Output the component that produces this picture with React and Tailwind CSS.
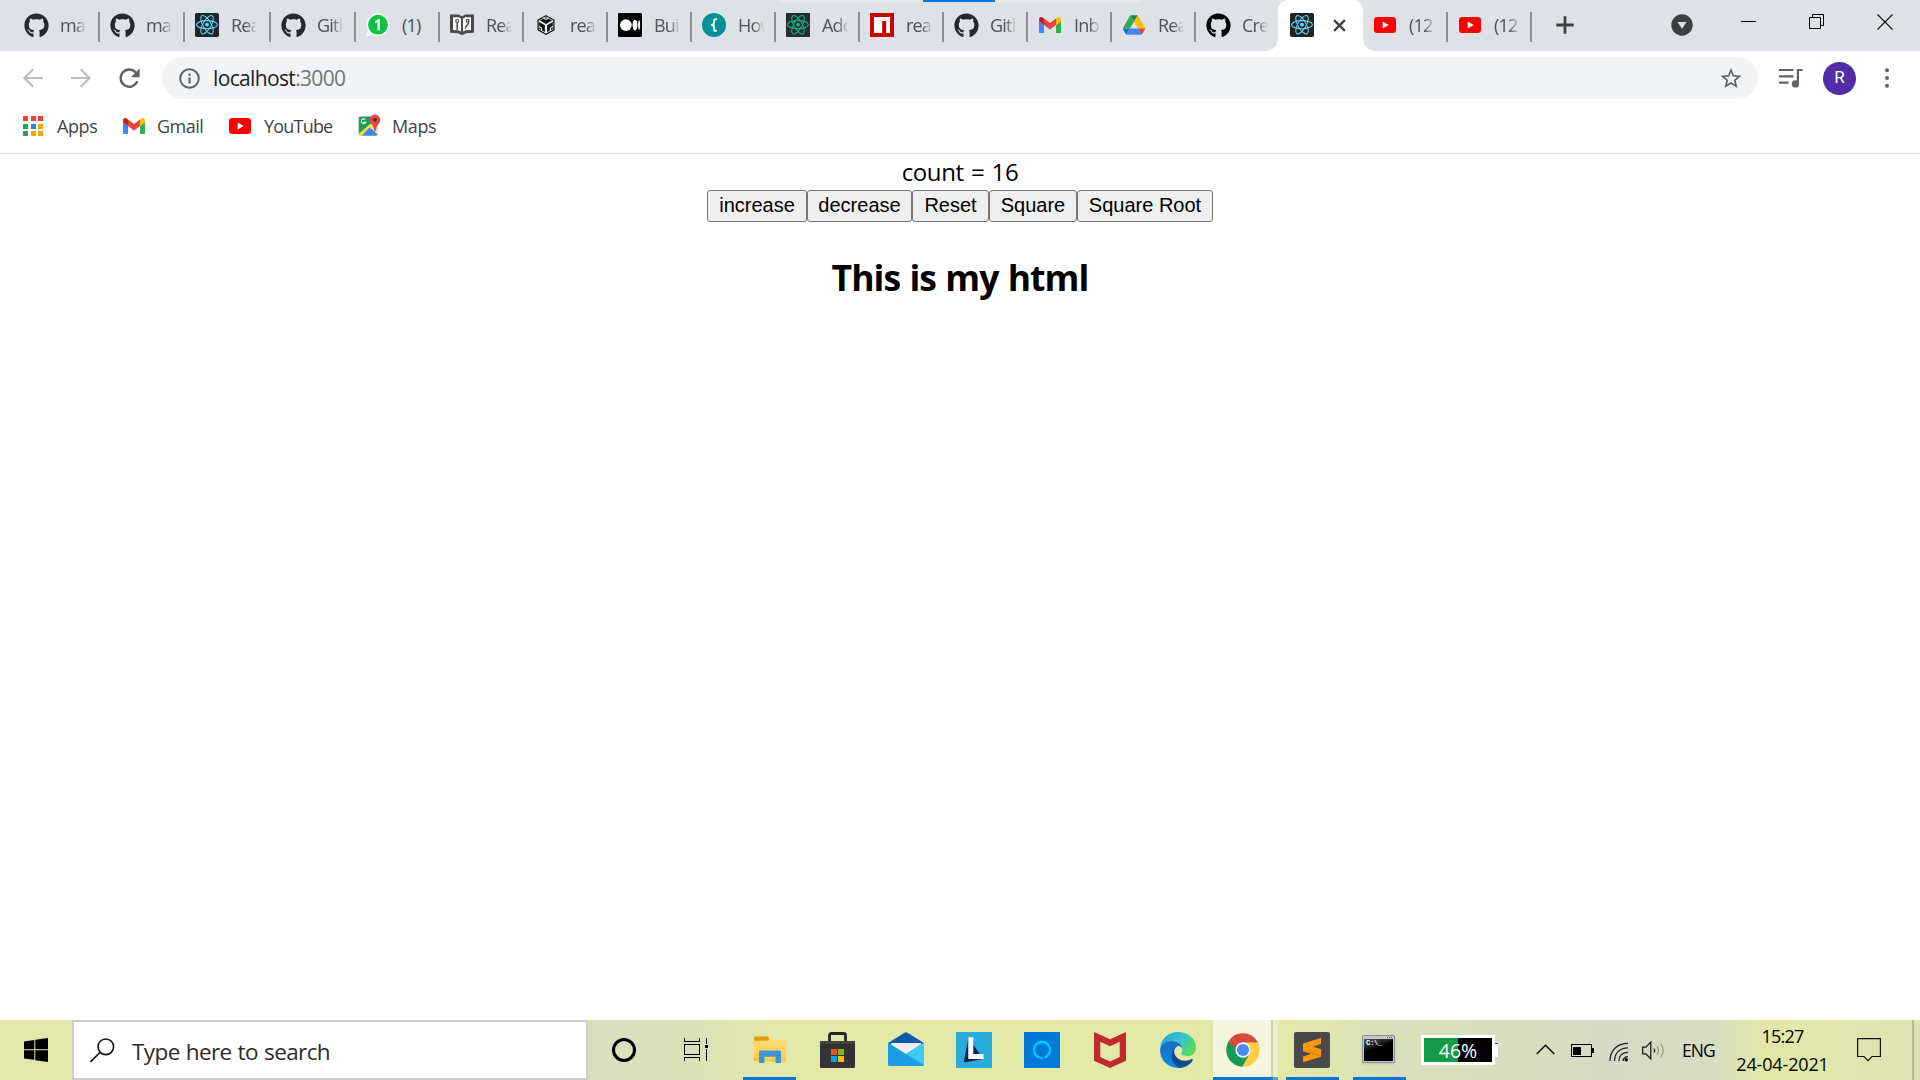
import React from 'react';
import { FaGithub } from 'react-icons/fa';

/* ---------- favicons ---------- */

const Github = ({ dark }) => <FaGithub size={25} color={dark ? '#000' : '#24292e'} className="shrink-0" />;

const ReactMark = ({ bg = '#20232a', fg = '#61dafb', rounded = true }) => (
  <svg width="24" height="24" viewBox="0 0 24 24" className="shrink-0" fill="none">
    <rect width="24" height="24" rx={rounded ? 1.8 : 0} fill={bg} />
    <circle cx="12" cy="11.7" r="1.9" fill={fg} />
    <g stroke={fg} strokeWidth="1.05">
      <ellipse cx="12" cy="11.7" rx="10.4" ry="4.1" />
      <ellipse cx="12" cy="11.7" rx="10.4" ry="4.1" transform="rotate(60 12 11.7)" />
      <ellipse cx="12" cy="11.7" rx="10.4" ry="4.1" transform="rotate(120 12 11.7)" />
    </g>
  </svg>
);

const Whatsapp = () => (
  <svg width="24" height="24" viewBox="0 0 24 24" className="shrink-0">
    <path d="M12 .3a11.4 11.4 0 1 1-5.4 21.5L.2 23.6l1.9-6.2A11.4 11.4 0 0 1 12 .3z" fill="#f7faf8" />
    <circle cx="12" cy="11.7" r="9.9" fill="#0cc143" />
    <path d="M8.8 8.6 12.4 6h1.5v11.3h-2.4V9l-2.2 1.4z" fill="#fff" />
  </svg>
);

const Book = () => (
  <svg width="24" height="24" viewBox="0 0 24 24" className="shrink-0" fill="none">
    <path d="M0 1.600 8.500 1.400 12 3.200l3.500-1.800 8.500.2v18.200l-8 .4-4 2.100-4-2.100-8-.4z" fill="#4a4a4a" />
    <path d="M3 4.200h5.600L11 5.600v13l-2.800-1.300L3 17zM21 4.200h-5.600L13 5.600v13l2.800-1.300L21 17z" fill="#fff" />
    <path d="M7.200 9.600v7.500M18.600 8.800c.4 3.600-3 3.200-3.200 6.800" stroke="#4a4a4a" strokeWidth="1.500" />
    <circle cx="7.200" cy="8" r="1.500" stroke="#4a4a4a" strokeWidth="1.200" />
    <circle cx="17.600" cy="7.800" r="1.400" stroke="#4a4a4a" strokeWidth="1.200" />
  </svg>
);

const Cube = () => (
  <svg width="24" height="24" viewBox="0 0 24 24" className="shrink-0">
    <path d="M12 2.800 19.900 7.200v9.600L12 21.200l-7.900-4.400V7.200z" fill="#eceef0" stroke="#151515" strokeWidth="1.300" />
    <path d="M12 4.300 18 7.500 12 10.900 6 7.500z" fill="#151515" />
    <path d="M5.200 9l5.700 3.200v6.900L5.200 16z" fill="#151515" />
    <path d="M18.800 9l-5.700 3.200v6.900l5.700-3.100z" fill="#151515" />
    <path d="M9.200 4.800 12 6.400l2.800-1.600M5 13.600l2.600 1.500v2.800M19 13.600l-2.600 1.500v2.800" fill="none" stroke="#eceef0" strokeWidth="1.100" />
  </svg>
);

const Medium = () => (
  <svg width="24" height="24" viewBox="0 0 24 24" className="shrink-0">
    <rect width="24" height="24" rx="1.3" fill="#000" />
    <circle cx="7.900" cy="12.100" r="5.900" fill="#fff" />
    <ellipse cx="17" cy="12.100" rx="2.500" ry="5.300" fill="#fff" />
    <ellipse cx="21.100" cy="12.100" rx="1" ry="4.800" fill="#fff" />
  </svg>
);

const Brace = () => (
  <svg width="24" height="24" viewBox="0 0 24 24" className="shrink-0">
    <circle cx="12" cy="12" r="12" fill="#009296" />
    <path d="M14.800 6.200h-.9c-1.300 0-1.900.6-1.900 1.900v1.700c0 1.400-.8 2.200-3 2.200 2.200 0 3 .8 3 2.200v1.700c0 1.300.6 1.900 1.900 1.900h.9" fill="none" stroke="#fff" strokeWidth="1.900" />
  </svg>
);

const Npm = () => (
  <svg width="24" height="24" viewBox="0 0 24 24" className="shrink-0">
    <rect width="24" height="24" fill="#cb0000" />
    <path d="M4 4h16v16h-3.800V8h-4v12H4z" fill="#fff" />
  </svg>
);

const Gmail = () => (
  <svg width="22" height="16.500" viewBox="52 42 88 66" className="shrink-0">
    <path fill="#4285f4" d="M58 108h14V74L52 59v43c0 3.320 2.690 6 6 6" />
    <path fill="#34a853" d="M120 108h14c3.320 0 6-2.690 6-6V59l-20 15" />
    <path fill="#fbbc04" d="M120 48v26l20-15v-8c0-7.420-8.470-11.650-14.400-7.200" />
    <path fill="#ea4335" d="M72 74V48l24 18 24-18v26L96 92" />
    <path fill="#c5221f" d="M52 51v8l20 15V48l-5.600-4.200c-5.940-4.450-14.400-.22-14.400 7.200" />
  </svg>
);

const Drive = () => (
  <svg width="22" height="20" viewBox="0 0 87.3 78" className="shrink-0">
    <path fill="#188038" d="m43.65 25 13.75-23.8c-1.35-.8-2.9-1.2-4.5-1.2h-18.5c-1.6 0-3.15.45-4.5 1.2z" />
    <path fill="#34a853" d="m43.65 25-13.75-23.8c-1.35.8-2.5 1.9-3.3 3.3l-25.4 44a9.06 9.06 0 0 0 -1.2 4.5h27.5z" />
    <path fill="#fbbc04" d="m73.4 26.5-12.7-22c-.8-1.4-1.95-2.5-3.3-3.3l-13.75 23.8 16.15 28h27.45c0-1.55-.4-3.1-1.2-4.5z" />
    <path fill="#1967d2" d="m6.6 66.85 3.85 6.65c.8 1.4 1.95 2.5 3.3 3.3l13.75-23.8h-27.5c0 1.55.4 3.1 1.2 4.5z" />
    <path fill="#ea4335" d="m73.55 76.8c1.35-.8 2.5-1.9 3.3-3.3l1.6-2.75 7.65-13.25c.8-1.4 1.2-2.95 1.2-4.5h-27.502z" />
    <path fill="#4285f4" d="m59.8 53h-32.3l-13.75 23.8c1.35.8 2.9 1.2 4.5 1.2h50.8c1.6 0 3.15-.45 4.5-1.2z" />
  </svg>
);

const Youtube = () => (
  <svg width="22" height="16" viewBox="0 0 22 16" className="shrink-0">
    <rect width="22" height="16" rx="3.2" fill="#f00" />
    <path d="m8.7 4.4 6 3.6-6 3.6z" fill="#fff" />
  </svg>
);

const Maps = () => (
  <svg width="23" height="24" viewBox="0 0 23 24" className="shrink-0">
    <path d="M2 2.500h18v17a2 2 0 0 1-2 2H2.500a1.800 1.800 0 0 1-1.800-1.800V4.300A1.800 1.800 0 0 1 2.500 2.500z" fill="#1e9e55" />
    <path d="M10.500 12 20 3v18z" fill="#e1e1e1" />
    <path d="M.7 20 12 10l3 3-9 8.500H2z" fill="#fddc45" />
    <path d="m11.500 13.600 7.600 7.900H4z" fill="#4285f4" />
    <path d="M7.200 5.400a2.300 2.300 0 1 0 .5 2.800H5.500" fill="none" stroke="#fff" strokeWidth="1.100" />
    <path d="M17 .5a5.300 5.300 0 0 1 5.300 5.300c0 3.600-3.800 5-4.600 11-.1.8-1.300.8-1.400 0-.8-6-4.600-7.400-4.600-11A5.300 5.300 0 0 1 17 .5z" fill="#e04a3f" />
    <circle cx="17" cy="5.800" r="1.900" fill="#7d211b" />
  </svg>
);

/* ---------- tab strip ---------- */

const Tab = ({ w, text, icon, bar = true, fade = true }) => (
  <div className={`flex h-[50px] shrink-0 items-center pl-2.5 ${w}`}>
    <div className="flex w-6 shrink-0 items-center justify-center">{icon}</div>
    <span
      className={`-mt-px ml-3 w-[27px] shrink-0 overflow-hidden whitespace-nowrap text-[18px] leading-6 tracking-[-0.8px] text-[#4d5155] ${
        fade ? '[mask-image:linear-gradient(to_right,#000_55%,transparent_98%)]' : ''
      }`}
    >
      {text}
    </span>
    {bar && <div className="mt-[3px] ml-auto h-[30px] w-[2px] bg-[#8c9094]" />}
  </div>
);

const leftTabs = [
  ['w-[86px]', 'mat', <Github />],
  ['w-[85px]', 'mat', <Github />],
  ['w-[86px]', 'Rea', <ReactMark />],
  ['w-[85px]', 'Gith', <Github />],
  ['w-[84px]', '(1)', <Whatsapp />, false],
  ['w-[84px]', 'Rea', <Book />],
  ['w-[84px]', 'rea', <Cube />],
  ['w-[84px]', 'Buil', <Medium />],
  ['w-[84px]', 'How', <Brace />],
  ['w-[84px]', 'Add', <ReactMark bg="#282c34" fg="#12b886" rounded={false} />],
  ['w-[84px]', 'rea', <Npm />],
  ['w-[84px]', 'Gith', <Github />],
  ['w-[84px]', 'Inb', <Gmail />],
  ['w-[84px]', 'Rea', <Drive />],
];

const TabStrip = () => (
  <div className="relative flex h-[51px] bg-[#dee1e6] pl-3.5">
    <div className="absolute top-0 left-[779px] h-[2px] w-[362px] bg-[#e8e8e8] pl-36">
      <div className="h-[2px] w-[72px] bg-[#0078d7]" />
    </div>
    {leftTabs.map(([w, text, icon, fade], i) => (
      <Tab key={i} w={w} text={text} icon={icon} fade={fade !== false} />
    ))}
    <Tab w="w-[82px]" text="Cre" icon={<Github dark />} bar={false} />
    <div className="relative flex h-[51px] w-[85px] shrink-0 items-center rounded-t-[10px] bg-white pb-px pl-3">
      <div className="absolute bottom-0 -left-3 h-3 w-3 bg-[radial-gradient(circle_at_0_0,transparent_11.5px,#fff_12px)]" />
      <div className="absolute -right-3 bottom-0 h-3 w-3 bg-[radial-gradient(circle_at_100%_0,transparent_11.5px,#fff_12px)]" />
      <ReactMark bg="#222" />
      <svg width="13" height="13" viewBox="0 0 14 14" className="ml-[19px]" stroke="#3c4043" strokeWidth="2.400">
        <path d="M1.200 1.200 12.800 12.800M12.800 1.200 1.200 12.800" />
      </svg>
    </div>
    <Tab w="w-[85px]" text="(12" icon={<Youtube />} />
    <Tab w="w-[84px]" text="(12" icon={<Youtube />} />
    <svg width="18" height="18" viewBox="0 0 18 18" className="mt-4 ml-6 shrink-0" stroke="#3c4043" strokeWidth="2.800">
      <path d="M9 .3v17.400M.3 9h17.400" />
    </svg>
    <svg width="22" height="22" viewBox="0 0 22 22" className="mt-3.5 ml-[97px] shrink-0">
      <circle cx="11" cy="11" r="10.700" fill="#3c4043" />
      <path d="M6.500 8h9L11 14.800z" fill="#dee1e6" />
    </svg>
    <div className="ml-auto flex h-[43px] shrink-0 items-center pr-[27px]">
      <div className="mr-[53px] h-px w-[15px] bg-black" />
      <svg width="15" height="15" viewBox="0 0 15 15" className="mr-[53px]" fill="none" stroke="#000">
        <path d="M.5 3.500h11v11H.5zM3.500 3.500v-3h11v11h-3" />
      </svg>
      <svg width="16" height="16" viewBox="0 0 16 16" stroke="#111" strokeWidth="1.100">
        <path d="M.5.500l15 15M15.500.500l-15 15" />
      </svg>
    </div>
  </div>
);

/* ---------- toolbar ---------- */

const Arrow = ({ flip }) => (
  <svg width="20" height="20" viewBox="0 0 20 20" className={`shrink-0 ${flip ? '-scale-x-100' : ''}`} fill="none" stroke="#babcbe" strokeWidth="2.100">
    <path d="M20 10H1.800M10.200 1.200 1.500 10l8.700 8.800" />
  </svg>
);

const Toolbar = () => (
  <div className="flex h-[54px] items-center bg-white pl-[23px]">
    <Arrow />
    <div className="w-7" />
    <Arrow flip />
    <svg width="21" height="21" viewBox="0 0 21 21" className="ml-7 shrink-0">
      <path d="M18.300 13.200A8.600 8.600 0 1 1 16.900 4.700" fill="none" stroke="#5f6368" strokeWidth="2.400" />
      <path d="M20.600.500v8.700h-8.700z" fill="#5f6368" />
    </svg>
    <div className="ml-[22px] flex h-[42px] w-[1596px] items-center rounded-full bg-[#f1f3f4] pl-[17px]">
      <svg width="21" height="21" viewBox="0 0 21 21" fill="none" className="shrink-0">
        <circle cx="10.500" cy="10.500" r="9.300" stroke="#5f6368" strokeWidth="2" />
        <path d="M10.500 9.300v6.200M10.500 5.400v2.300" stroke="#5f6368" strokeWidth="2.200" />
      </svg>
      <span className="ml-[13px] text-[21px] leading-[42px] tracking-[-0.65px] text-[#202124]">
        localhost<span className="text-[#70757a]">:3000</span>
      </span>
      <svg width="22" height="22" viewBox="1.500 1.500 21 20" className="mr-4 ml-auto" fill="#5f6368">
        <path d="M22 9.240l-7.190-.620L12 2 9.190 8.630 2 9.240l5.460 4.730L5.820 21 12 17.270 18.180 21l-1.630-7.030L22 9.240zM12 15.400l-3.760 2.270 1-4.280-3.320-2.880 4.380-.380L12 6.100l1.710 4.040 4.380.380-3.320 2.880 1 4.280L12 15.400z" />
      </svg>
    </div>
    <svg width="24" height="20" viewBox="0 0 24 20" className="ml-[21px] shrink-0" fill="none" stroke="#5f6368" strokeWidth="2.200">
      <path d="M0 2h14.500M0 8.300h14.500M0 14.700h9.500M18.900 16V2h4.600" />
      <circle cx="16.400" cy="15.900" r="3.600" fill="#5f6368" stroke="none" />
    </svg>
    <div className="ml-5 flex h-[33px] w-[33px] shrink-0 items-center justify-center rounded-full bg-[#512da8] font-[Roboto] text-[17px] text-white">R</div>
    <svg width="4" height="20" viewBox="0 0 4 20" className="ml-[29px] shrink-0" fill="#5f6368">
      <circle cx="2" cy="2.300" r="2" />
      <circle cx="2" cy="10" r="2" />
      <circle cx="2" cy="17.700" r="2" />
    </svg>
  </div>
);

const appDots = ['#f44336', '#f44336', '#f44336', '#2a9f5a', '#1e88e5', '#f9a800', '#2a9f5a', '#f9a800', '#f9a800'];

const Bookmarks = () => (
  <div className="flex h-[49px] items-center border-b border-[#d4d6d8] bg-white pb-1.5 pl-[23px] text-[18px] leading-6 text-[#3f4347]">
    <svg width="20" height="20" viewBox="0 0 20 20" shapeRendering="crispEdges">
      {appDots.map((c, i) => (
        <rect key={i} x={(i % 3) * 7.5} y={Math.floor(i / 3) * 7.5} width="5" height="5" fill={c} />
      ))}
    </svg>
    <span className="-mt-px ml-3.5 w-[66px] tracking-[-0.4px]">Apps</span>
    <Gmail />
    <span className="-mt-px ml-[12px] w-[72px] tracking-[-0.5px]">Gmail</span>
    <Youtube />
    <span className="-mt-px ml-[13px] w-[94px] tracking-[-0.8px]">YouTube</span>
    <Maps />
    <span className="-mt-px ml-[11px] tracking-[-0.4px]">Maps</span>
  </div>
);

/* ---------- page ---------- */

const actions = [
  ['increase', 'w-[100px]'],
  ['decrease', 'w-[105px]'],
  ['Reset', 'w-[77px]'],
  ['Square', 'w-[88px]'],
  ['Square Root', 'w-[136px]'],
];

const Page = () => (
  <main className="flex grow flex-col items-center bg-white text-black">
    <p className="h-[36px] text-[24px] leading-[35px] tracking-[-0.4px] [word-spacing:1.5px]">count = 16</p>
    <div className="flex">
      {actions.map(([label, w]) => (
        <button
          key={label}
          className={`h-8 rounded-[3px] border border-[#767676] bg-[#efefef] pb-px font-['Liberation_Sans'] text-[20px] leading-[29px] whitespace-nowrap ${w}`}
        >
          {label}
        </button>
      ))}
    </div>
    <h2 className="mt-[30px] text-[35.500px] leading-[50px] font-bold tracking-[-0.95px] [word-spacing:1px]">This is my html</h2>
  </main>
);

/* ---------- taskbar ---------- */

const Cell = ({ children, w = 'w-[68px]', open, bar = 'left-[8px]' }) => (
  <div className={`relative flex h-[60px] shrink-0 items-center justify-center ${w}`}>
    {children}
    {open && <div className={`absolute bottom-0 h-[3px] w-[53px] bg-[#0078d7] ${bar}`} />}
  </div>
);

const Explorer = () => (
  <svg width="32" height="28" viewBox="0 0 32 28">
    <defs>
      <linearGradient id="folder" x1="0" y1="0" x2="0" y2="1">
        <stop offset="0" stopColor="#ffdc78" />
        <stop offset="1" stopColor="#ffca45" />
      </linearGradient>
    </defs>
    <path d="M0 5V1.800A1.300 1.300 0 0 1 1.300.500h12l2 2L14 5z" fill="#e09c0b" />
    <path d="M0 4.800h13l2.300-1.600H30.500A1.500 1.500 0 0 1 32 4.700v19.500a1.300 1.300 0 0 1-1.300 1.300H1.300A1.300 1.300 0 0 1 0 24.200z" fill="url(#folder)" />
    <path d="M5 16a1.500 1.500 0 0 1 1.500-1.500h19A1.500 1.500 0 0 1 27 16v11h-5.500v-6.300h-11V27H5z" fill="#3a95dd" />
  </svg>
);

const Store = () => (
  <svg width="35" height="36" viewBox="0 0 35 36" className="mr-px">
    <path d="M9.500 11V3.500A2 2 0 0 1 11.500 1.500h12a2 2 0 0 1 2 2V11" fill="none" stroke="#262626" strokeWidth="2.800" />
    <path d="M0 9h35v25.500a1.500 1.500 0 0 1-1.500 1.500h-32A1.500 1.500 0 0 1 0 34.500z" fill="#333" />
    <path d="M0 9h35v3H0z" fill="#444" />
    <path d="M11 17h6v6h-6z" fill="#f25022" />
    <path d="M18 17h6v6h-6z" fill="#7fba00" />
    <path d="M11 24h6v6h-6z" fill="#00a4ef" />
    <path d="M18 24h6v6h-6z" fill="#ffb900" />
  </svg>
);

const Mail = () => (
  <svg width="36" height="34" viewBox="0 0 36 34" className="mb-0.5">
    <path d="M0 11 16.500.800a3 3 0 0 1 3 0L36 11v6H0z" fill="#0a5cad" />
    <path d="M3 11h30v8L18 25 3 19z" fill="#f1f1f3" />
    <path d="M0 10.500 18 22l18-11.500V32.500a1.500 1.500 0 0 1-1.500 1.500h-33A1.500 1.500 0 0 1 0 32.500z" fill="#1c9de6" />
    <path d="M36 10.500 18 22l18 11z" fill="#3fc9f6" />
  </svg>
);

const Lenovo = () => (
  <svg width="36" height="36" viewBox="0 0 36 36">
    <rect width="36" height="36" fill="#29acdb" />
    <path d="M12.500 5.500 7.800 30.500 27 27z" fill="#06235e" />
    <path d="M12.300 5.200h5v16.800H27.500v5H12.300z" fill="#fff" />
  </svg>
);

const Alexa = () => (
  <svg width="36" height="36" viewBox="0 0 36 36">
    <rect width="36" height="36" fill="#0078d7" />
    <path d="M15.500 25.500a8 8 0 1 1 5 0" fill="none" stroke="#00d0ff" strokeWidth="2.100" />
    <path d="M15 25c1.300 1.300 2.500 1.700 4.300 1.500" fill="none" stroke="#00d0ff" strokeWidth="1.500" />
  </svg>
);

const Mcafee = () => (
  <svg width="32" height="36" viewBox="0 0 32 36">
    <path fillRule="evenodd" d="M0 0 16 7.300 32 0V28.800L16 36 0 28.800zM6.300 9.700v15.400L16 29.500l9.700-4.400V9.700L16 14.200z" fill="#c1292e" />
  </svg>
);

const Edge = () => (
  <svg width="36" height="36" viewBox="0 0 36 36">
    <defs>
      <linearGradient id="edgeTop" x1="0" y1=".3" x2="1" y2=".7">
        <stop offset="0" stopColor="#23a6e4" />
        <stop offset=".5" stopColor="#30c6cf" />
        <stop offset="1" stopColor="#62dd45" />
      </linearGradient>
      <linearGradient id="edgeLeft" x1="0" y1="0" x2="0" y2="1">
        <stop offset="0" stopColor="#116fc0" />
        <stop offset="1" stopColor="#0c8be2" />
      </linearGradient>
    </defs>
    <path d="M.2 16C1 6.500 8.500 0 18 0c10.500 0 18 7 18 15.500 0 5-3.500 8.700-8.500 8.700-4.300 0-6.300-1.700-6.300-2.700 0-.8 1.300-1.500 1.300-4 0-4.300-4.600-8.500-11-8.500C6 9 1.500 12 .2 16z" fill="url(#edgeTop)" />
    <path d="M.1 17C1 12 5.500 9 11.500 9c6.300 0 11 4 11 8.200-1-3-3.700-3.700-5-3-5.500 2.500-5.200 10 0 14 3 2.300 6.500 3.300 10 2.500l4.500-1C28.500 34 23.500 36 18 36 8 36-.5 28 .1 17z" fill="url(#edgeLeft)" />
    <path d="M17 14.300c-8 4.200-7 17 2.500 21.600 5.500-.3 10.200-3.200 13-7.300.8-1.200 0-2-1.200-1.400C24.500 30.500 15.500 28.500 14.200 20c-.3-2.500.8-4.500 2.800-5.700z" fill="#114a8b" />
  </svg>
);

const Chrome = () => (
  <svg width="34" height="34" viewBox="0 0 34 34">
    <circle cx="17" cy="17" r="16.700" fill="#ffcd40" />
    <path d="M2.500 8.600A16.700 16.700 0 0 0 16.300 33.700L23.500 20.700 17 17 10.500 20.700 3.300 8z" fill="#12995a" />
    <path d="M2.500 8.600A16.700 16.700 0 0 1 31.500 8.700l.4.800H17L10.500 20.700z" fill="#d94b3e" />
    <path d="M2.500 8.600 10.500 21l4-1z" fill="#12995a" />
    <circle cx="17" cy="17" r="7.700" fill="#f6f6f6" />
    <circle cx="17" cy="17" r="6.100" fill="#4c8bf5" />
  </svg>
);

const Sublime = () => (
  <svg width="36" height="36" viewBox="0 0 36 36">
    <rect width="36" height="36" rx="2" fill="#494949" />
    <path d="M9 11.500 27 6v6l-8 2.500 8 2.800v7.400L9 30.300v-5.800l8.500-2.800L9 19z" fill="#ff9800" />
    <path d="M9 18.700v.5l8.500 2.600L27 24.700v-1.500l-8-2.700z" fill="#e58600" />
  </svg>
);

const Cmd = () => (
  <div className="mr-[3px] mb-0.5 flex h-[28px] w-[33px] flex-col rounded-[1px] border border-[#8e9299] bg-[#c3c6cb] p-px shadow-sm">
    <div className="flex h-[2px] justify-end gap-px pr-px">
      <i className="h-px w-px bg-[#555]" />
      <i className="h-px w-px bg-[#555]" />
      <i className="h-px w-px bg-[#555]" />
    </div>
    <div className="grow bg-[linear-gradient(160deg,#555_0%,#222_30%,#000_42%)] pl-[2px] font-['Liberation_Mono'] text-[7px] leading-[9px] font-bold tracking-[-0.2px] text-white">C:\_</div>
  </div>
);

const Taskbar = () => (
  <footer className="flex h-[60px] shrink-0 bg-[linear-gradient(90deg,#e2e8aa_0px,#e2e8aa_72px,#d9dfbe_588px,#dbe1b6_690px,#e2e9a8_780px,#e3eaa7_1000px,#e1e8a8_1290px,#d8dfbc_1400px,#d9e0b9_1440px,#d7dbc6_1600px,#d8dcc2_1710px,#e1e8a6_1765px,#e0e6ac_1830px,#dde2b4_1920px)] text-black">
    <div className="flex w-[72px] shrink-0 items-center justify-center">
      <svg width="24" height="24" viewBox="0 0 24 24">
        <path d="M0 3.400 10.300 2v9.300H0zM11.300 1.800 24 0v11.300H11.300zM0 12.300h10.300v9.500L0 20.600zM11.300 12.300H24V24l-12.700-1.800z" />
      </svg>
    </div>
    <div className="flex w-[516px] shrink-0 items-center border-2 border-[#ccc] bg-white pl-4">
      <svg width="25" height="25" viewBox="0 0 25 25" fill="none" stroke="#111" strokeWidth="1.600">
        <circle cx="15.800" cy="8.800" r="7.800" />
        <path d="M10.200 14.300.500 24" />
      </svg>
      <span className="mt-[3px] ml-[17px] text-[22.5px] leading-[30px] tracking-[-0.6px] text-[#2b2b2b] [word-spacing:0.8px]">Type here to search</span>
    </div>
    <Cell w="w-[72px]">
      <div className="h-6 w-6 rounded-full border-[3.5px] border-black" />
    </Cell>
    <Cell w="w-[76px]">
      <svg width="25" height="24" viewBox="0 0 25 24" className="mr-1" fill="none" stroke="#000" shapeRendering="crispEdges">
        <path d="M.5 0v3.500h15V0M.5 6.500h15v10H.5zM.5 23v-3.500h15V23M22.500 0v6M22.500 11v12" />
        <path d="M21 7h3v3h-3z" fill="#000" stroke="none" />
      </svg>
    </Cell>
    <Cell open bar="left-[7px]"><Explorer /></Cell>
    <Cell><Store /></Cell>
    <Cell><Mail /></Cell>
    <Cell><Lenovo /></Cell>
    <Cell><Alexa /></Cell>
    <Cell><Mcafee /></Cell>
    <Cell><Edge /></Cell>
    <div className="ml-px flex w-[65px] shrink-0">
      <div className="flex w-[58px] items-center justify-center border-b-[3px] border-[#0078d7] bg-[#f3f5df] pt-[2px] pl-[2px]"><Chrome /></div>
      <div className="w-[2px] border-b-[3px] border-[#3a80b4] bg-[#cdd3a0]" />
      <div className="w-[5px] border-b-[3px] border-[#4da1e2] bg-[#ebefc9]" />
    </div>
    <Cell open><Sublime /></Cell>
    <Cell open bar="left-[7px]"><Cmd /></Cell>
    <div className="mt-[15px] ml-[7px] flex h-[30px] shrink-0">
      <div className="flex h-[30px] w-[74px] items-center justify-center border-[3px] border-white bg-[linear-gradient(90deg,#149a49_34px,#000_34px)] pt-0.5 text-[19.5px] leading-6 text-white">46%</div>
      <div className="mt-2 h-[14px] w-[3px] border-t border-[#555] bg-white" />
    </div>
    <div className="flex grow items-center">
      <svg width="19" height="11" viewBox="0 0 19 11" className="-mt-px ml-[38px]" fill="none" stroke="#111" strokeWidth="1.500">
        <path d="M.7 10 9.500 1.200 18.300 10" />
      </svg>
      <svg width="24" height="14" viewBox="0 0 24 14" className="mt-px ml-4" fill="none" stroke="#000" shapeRendering="crispEdges">
        <path d="M.5.500h20v12H.5z" strokeWidth="1.200" />
        <path d="M2 3h8v8H2zM21 4h2v5h-2z" fill="#000" stroke="none" />
      </svg>
      <svg width="20" height="20" viewBox="0 0 20 20" className="mt-[3px] ml-3.5" fill="none" stroke="#222" strokeWidth="1.300">
        <path d="M1 19C1 8.500 8 1.300 19 1.300M5.500 19C5.500 11 11 5.800 19 5.800M10 19c0-5.500 3.500-8.700 9-8.700M14 19c0-2.500 2-4.300 5-4.300" />
        <circle cx="17.300" cy="17.800" r="1.700" fill="#000" stroke="none" />
      </svg>
      <svg width="23" height="19" viewBox="0 0 23 19" className="ml-[13px]" fill="none" stroke="#111" strokeWidth="1.200">
        <path d="M.7 6.200h3.200L8.800 1v17l-4.900-5.200H.7z" />
        <path d="M12 7.500c.9 1.300.9 2.700 0 4" />
        <path d="M15 5c2 3 2 6 0 9M18.500 2.500c3.700 4.700 3.700 9.300 0 14" stroke="#9a9d85" />
      </svg>
      <span className="ml-[17px] w-[36px] text-[17.5px] tracking-[-1px]">ENG</span>
      <div className="ml-[17px] flex w-[95px] flex-col items-center text-[18px] leading-7 whitespace-nowrap">
        <span className="tracking-[-0.8px]">15:27</span>
        <span className="tracking-[-0.15px]">24-04-2021</span>
      </div>
      <svg width="24" height="24" viewBox="0 0 24 24" className="ml-[27px]" fill="none" stroke="#111" strokeWidth="1.200">
        <path d="M.6.600h22.800v17.900H15L11 22.600 7 18.500H.6z" />
      </svg>
      <div className="mr-1.5 ml-auto h-[60px] w-[2px] bg-[#b6ba90]" />
    </div>
  </footer>
);

export default function App() {
  return (
    <div className="flex h-[1080px] w-[1920px] flex-col overflow-hidden bg-white font-['Open_Sans',sans-serif]">
      <TabStrip />
      <Toolbar />
      <Bookmarks />
      <Page />
      <Taskbar />
    </div>
  );
}
